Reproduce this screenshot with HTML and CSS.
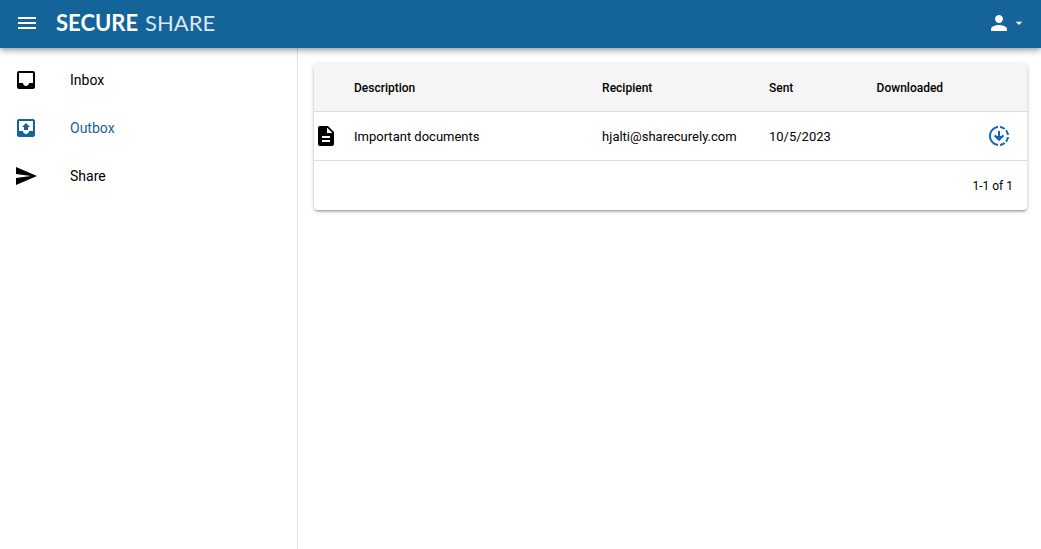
FILE: index.html
```html
<!DOCTYPE html>
<html lang="en">
<head>
<meta charset="utf-8">
<meta name="viewport" content="width=device-width, initial-scale=1">
<title>Secure Share</title>
<link rel="stylesheet" href="styles.css">
</head>
<body>
<header class="toolbar">
  <button class="icon-button" type="button" aria-label="Menu">
    <svg class="icon" viewBox="0 0 24 24"><path d="M3 18h18v-2H3v2zm0-5h18v-2H3v2zm0-7v2h18V6H3z"/></svg>
  </button>
  <a class="brand" href="#"><span class="brand-strong">SECURE</span><span class="brand-light">SHARE</span></a>
  <button class="account" type="button" aria-label="Account">
    <svg class="icon" viewBox="0 0 24 24"><path d="M12 12c2.21 0 4-1.79 4-4s-1.790-4-4-4-4 1.790-4 4 1.790 4 4 4zm0 2c-2.670 0-8 1.340-8 4v2h16v-2c0-2.660-5.330-4-8-4z"/></svg>
    <svg class="caret" viewBox="0 0 24 24"><path d="M7 10l5 5 5-5z"/></svg>
  </button>
</header>
<div class="layout">
  <nav class="drawer">
    <a class="nav-item" href="#">
      <svg class="icon" viewBox="0 0 24 24"><path d="M19 3H4.990C3.880 3 3.010 3.890 3.010 5L3 19c0 1.100.880 2 1.990 2H19c1.100 0 2-.900 2-2V5c0-1.110-.900-2-2-2zm0 12h-4c0 1.660-1.350 3-3 3s-3-1.340-3-3H4.990V5H19v10z"/></svg>
      <span>Inbox</span>
    </a>
    <a class="nav-item active" href="#" aria-current="page">
      <svg class="icon" viewBox="0 0 24 24"><path d="M19 3H4.990C3.880 3 3.010 3.890 3.010 5L3 19c0 1.100.880 2 1.990 2H19c1.100 0 2-.900 2-2V5c0-1.110-.900-2-2-2zm0 12h-4c0 1.660-1.350 3-3 3s-3-1.340-3-3H4.990V5H19v10zM8 11h2v3h4v-3h2l-4-4-4 4z"/></svg>
      <span>Outbox</span>
    </a>
    <a class="nav-item" href="#">
      <svg class="icon" viewBox="0 0 24 24"><path d="M2.010 21L23 12 2.010 3 2 10l15 2-15 2z"/></svg>
      <span>Share</span>
    </a>
  </nav>
  <main class="page">
    <section class="card">
      <table class="files">
        <colgroup><col class="col-icon"><col class="col-description"><col class="col-recipient"><col class="col-sent"><col class="col-downloaded"></colgroup>
        <thead>
          <tr><th></th><th>Description</th><th>Recipient</th><th>Sent</th><th>Downloaded</th></tr>
        </thead>
        <tbody>
          <tr>
            <td class="cell-icon"><svg class="icon" viewBox="0 0 24 24"><path d="M14 2H6c-1.100 0-1.990.900-1.990 2L4 20c0 1.100.890 2 1.990 2H18c1.100 0 2-.900 2-2V8l-6-6zm2 16H8v-2h8v2zm0-4H8v-2h8v2zm-3-5V3.500L18.500 9H13z"/></svg></td>
            <td>Important documents</td>
            <td>hjalti@sharecurely.com</td>
            <td>10/5/2023</td>
            <td class="cell-status"><svg class="icon" viewBox="0 0 24 24" role="img" aria-label="Not downloaded"><path d="M18.320 4.260C16.840 3.050 15.010 2.250 13 2.050v2.020c1.460.180 2.790.760 3.900 1.620l1.420-1.430zM19.930 11h2.020c-.200-2.010-1-3.840-2.210-5.320L18.310 7.100c.860 1.110 1.440 2.440 1.620 3.900zm-1.620 5.900l1.430 1.430c1.210-1.480 2.010-3.320 2.210-5.320h-2.020c-.180 1.450-.760 2.780-1.620 3.890zM13 19.930v2.020c2.010-.200 3.840-1 5.320-2.210l-1.430-1.430c-1.100.860-2.430 1.440-3.890 1.620zM15.590 10.590L13 13.170V7h-2v6.170l-2.590-2.590L7 12l5 5 5-5-1.410-1.410zM11 19.930v2.020c-5.050-.500-9-4.760-9-9.950s3.950-9.450 9-9.950v2.020C7.050 4.560 4 7.920 4 12s3.050 7.440 7 7.930z"/><path d="M7 12h10l-5 5z"/></svg></td>
          </tr>
        </tbody>
      </table>
      <footer class="pagination">1-1 of 1</footer>
    </section>
  </main>
</div>
</body>
</html>
```
FILE: styles.css
```css
* {
  box-sizing: border-box;
}

body {
  margin: 0;
  min-height: 100vh;
  display: flex;
  flex-direction: column;
  background: #fff;
  color: #000;
  font: 14px/20px Roboto, "Liberation Sans", sans-serif;
}

a {
  color: inherit;
  text-decoration: none;
}

button {
  display: flex;
  align-items: center;
  padding: 0;
  border: 0;
  background: none;
  color: inherit;
  cursor: pointer;
}

.icon {
  display: block;
  flex: none;
  width: 24px;
  height: 24px;
  fill: currentColor;
}

.toolbar {
  position: relative;
  z-index: 1;
  display: flex;
  align-items: center;
  height: 48px;
  padding: 0 14px 2px 15px;
  background: #146499;
  color: #fff;
  box-shadow: 0 2px 4px -1px rgba(0, 0, 0, 0.2), 0 4px 5px rgba(0, 0, 0, 0.14), 0 1px 10px rgba(0, 0, 0, 0.12);
}

.brand {
  display: flex;
  gap: 7px;
  margin-left: 17px;
  font: 22px/24px Lato, sans-serif;
}

.brand-strong {
  font-weight: 700;
}

.brand-light {
  font-weight: 400;
  color: #dce8f0;
}

.account {
  margin-left: auto;
}

.caret {
  width: 16px;
  height: 16px;
  fill: currentColor;
}

.layout {
  flex: 1;
  display: grid;
  grid-template-columns: 298px 1fr;
}

.drawer {
  padding-top: 8px;
  border-right: 1px solid #e0e0e0;
}

.nav-item {
  display: flex;
  align-items: center;
  gap: 32px;
  height: 48px;
  padding: 0 14px;
}

.active {
  color: #146499;
}

.page {
  padding: 16px 14px 16px 16px;
}

.card {
  overflow: hidden;
  border-radius: 4px;
  background: #fff;
  box-shadow: 0 1px 5px rgba(0, 0, 0, 0.2), 0 2px 2px rgba(0, 0, 0, 0.14), 0 3px 1px -2px rgba(0, 0, 0, 0.12);
}

.files {
  width: 100%;
  table-layout: fixed;
  border-spacing: 0;
  font-size: 13px;
}

.col-icon {
  width: 32px;
}

.col-description {
  width: 34.8%;
}

.col-recipient {
  width: 23.4%;
}

.col-sent {
  width: 15.1%;
}

.files th,
.files td {
  height: 48px;
  padding: 0 8px;
  border-bottom: 1px solid #dcdcdc;
  text-align: left;
}

.files td {
  height: 49px;
  line-height: 21px;
}

.files th {
  background: #f5f5f5;
  font-size: 12px;
  font-weight: 500;
}

.files .cell-icon {
  padding: 0;
}

.files .cell-status {
  padding-right: 16px;
}

.cell-status .icon {
  margin-left: auto;
  color: #1565c0;
}

.pagination {
  display: flex;
  align-items: center;
  justify-content: flex-end;
  height: 49px;
  padding: 0 14px;
  font-size: 12px;
}
```
